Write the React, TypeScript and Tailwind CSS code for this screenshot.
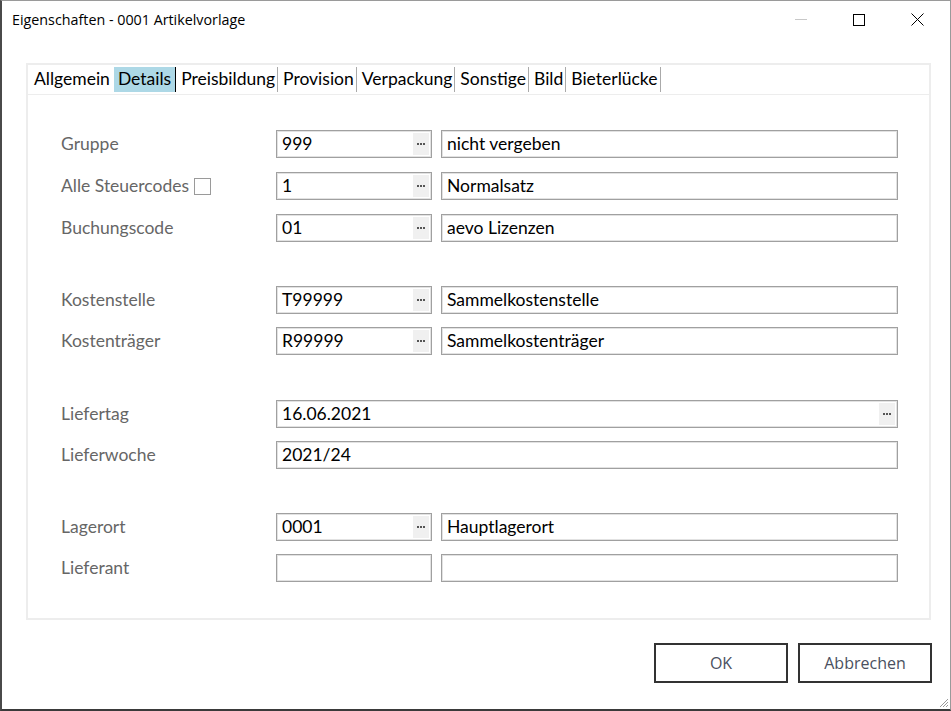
import React from "react";

const labelFont = { fontFamily: "Lato, 'Noto Sans', sans-serif" };

function Dots() {
  return (
    <div className="flex h-[22px] w-[16px] items-center justify-center gap-[1px] bg-[#f0f0f0]">
      <span className="h-[2px] w-[2px] bg-[#555]" />
      <span className="h-[2px] w-[2px] bg-[#555]" />
      <span className="h-[2px] w-[2px] bg-[#555]" />
    </div>
  );
}

function Field({ value = "", width, dots = false }: { value?: string; width: string; dots?: boolean }) {
  return (
    <div
      className={`flex h-[28px] items-center justify-between border border-[#a0a0a0] pl-[5px] pr-[2px] text-[17.5px] text-black shadow-[inset_0_0_0_1px_#e2e2e2] ${width}`}
    >
      <span className="leading-none">{value}</span>
      {dots && <Dots />}
    </div>
  );
}

function Row({
  label,
  a,
  b,
  dots = true,
  check = false,
  full = false,
  mt,
}: {
  label: string;
  a?: string;
  b?: string;
  dots?: boolean;
  check?: boolean;
  full?: boolean;
  mt: string;
}) {
  return (
    <div className={`flex items-center ${mt}`}>
      <div className="flex w-[215px] items-center text-[17.5px] text-[#666]">
        <span>{label}</span>
        {check && <span className="ml-[5px] inline-block h-[17px] w-[17px] border border-[#9a9a9a] bg-white" />}
      </div>
      {full ? (
        <Field value={a} width="w-[622px]" dots={dots} />
      ) : (
        <div className="flex gap-[9px]">
          <Field value={a} width="w-[156px]" dots={dots} />
          <Field value={b} width="w-[457px]" />
        </div>
      )}
    </div>
  );
}

const tabs = ["Allgemein", "Details", "Preisbildung", "Provision", "Verpackung", "Sonstige", "Bild", "Bieterlücke"];

export default function App() {
  return (
    <div className="relative h-[711px] w-[951px] overflow-hidden bg-white" style={labelFont}>
      <div className="flex h-[711px] w-[951px] flex-col border-l-2 border-t border-b-2 border-r border-l-[#4a4a4a] border-t-[#9a9a9a] border-b-[#3a3a3a] border-r-[#9a9a9a]">
        {/* title bar */}
        <div className="flex h-[37px] items-center justify-between">
          <span className="pl-[10px] text-[14.3px] text-black" style={{ fontFamily: "'Open Sans', 'Noto Sans', sans-serif" }}>
            Eigenschaften - 0001 Artikelvorlage
          </span>
          <div className="flex items-center">
            <div className="flex w-[58px] justify-center">
              <span className="h-[1px] w-[12px] bg-[#c8c8c8]" />
            </div>
            <div className="flex w-[58px] justify-center">
              <span className="h-[12px] w-[12px] border border-black" />
            </div>
            <div className="flex w-[58px] justify-center">
              <svg width="13" height="13" viewBox="0 0 13 13">
                <path d="M0.5 0.5 L12.5 12.5 M12.5 0.5 L0.5 12.5" stroke="black" strokeWidth="1" />
              </svg>
            </div>
            <div className="w-[4px]" />
          </div>
        </div>

        {/* panel */}
        <div className="ml-[24px] mr-[19px] mt-[25px] flex h-[557px] flex-col border-2 border-[#ededed]">
          <div className="flex h-[30px] items-center border-b border-[#ededed] pl-[4px] text-[17.5px] text-black">
            {tabs.map((t, i) => {
              const active = t === "Details";
              const first = i === 0;
              return (
                <div key={t} className="flex h-[25px] items-center">
                  <span
                    className={`flex h-[25px] items-center ${active ? "bg-[#add8e6] px-[4px]" : first ? "pl-[2px] pr-[4px]" : "pl-[5px] pr-[2px]"}`}
                  >
                    {t}
                  </span>
                  {!first && <span className={`h-[25px] w-[1px] ${active ? "bg-black" : "bg-[#aaaaaa]"}`} />}
                </div>
              );
            })}
          </div>

          <div className="flex flex-col pl-[33px]">
            <Row mt="mt-[35px]" label="Gruppe" a="999" b="nicht vergeben" />
            <Row mt="mt-[14px]" label="Alle Steuercodes" check a="1" b="Normalsatz" />
            <Row mt="mt-[14px]" label="Buchungscode" a="01" b="aevo Lizenzen" />
            <Row mt="mt-[44px]" label="Kostenstelle" a="T99999" b="Sammelkostenstelle" />
            <Row mt="mt-[13px]" label="Kostenträger" a="R99999" b="Sammelkostenträger" />
            <Row mt="mt-[45px]" label="Liefertag" a="16.06.2021" full />
            <Row mt="mt-[13px]" label="Lieferwoche" a="2021/24" full dots={false} />
            <Row mt="mt-[44px]" label="Lagerort" a="0001" b="Hauptlagerort" />
            <Row mt="mt-[13px]" label="Lieferant" a="" b="" dots={false} />
          </div>
        </div>

        {/* buttons */}
        <div className="mr-[18px] mt-[23px] flex justify-end gap-[10px]" style={{ fontFamily: "'Open Sans', 'Noto Sans', sans-serif" }}>
          <button className="flex h-[40px] w-[134px] items-center justify-center border-2 border-[#333] bg-white text-[16px] text-[#4a5060]">
            OK
          </button>
          <button className="flex h-[40px] w-[134px] items-center justify-center border-2 border-[#333] bg-white text-[16px] text-[#4a5060]">
            Abbrechen
          </button>
        </div>
      </div>
      {/* resize grip */}
      <svg className="absolute bottom-[3px] right-[2px]" width="10" height="10" viewBox="0 0 10 10">
        <path d="M9 1 L1 9 M9 4 L4 9 M9 7 L7 9" stroke="#9a9a9a" strokeWidth="1" />
      </svg>
    </div>
  );
}
